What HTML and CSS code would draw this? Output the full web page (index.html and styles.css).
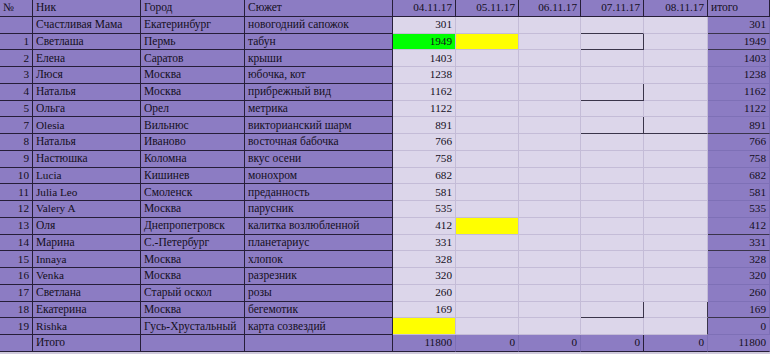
FILE: index.html
```html
<!DOCTYPE html>
<html lang="ru">
<head>
<meta charset="utf-8">
<title>Таблица</title>
<link rel="stylesheet" href="styles.css">
</head>
<body>
<table class="sheet">
  <colgroup>
    <col class="c-num"><col class="c-nick"><col class="c-city"><col class="c-plot">
    <col class="c-d1"><col class="c-d2"><col class="c-d3"><col class="c-d4"><col class="c-d5"><col class="c-tot">
  </colgroup>
  <thead>
    <tr class="head">
      <th class="p">№</th><th class="p">Ник</th><th class="p">Город</th><th class="p">Сюжет</th>
      <th class="p r n">04.11.17</th><th class="p r n">05.11.17</th><th class="p r n">06.11.17</th><th class="p r n">07.11.17</th><th class="p r n">08.11.17</th><th class="p tothead">итого</th>
    </tr>
  </thead>
  <tbody>
    <tr><td class="p r n"></td><td class="p">Счастливая Мама</td><td class="p">Екатеринбург</td><td class="p">новогодний сапожок</td><td class="v n">301</td><td class="v"></td><td class="v"></td><td class="v dk-bot"></td><td class="v"></td><td class="t n dk-bot">301</td></tr>
    <tr><td class="p r n">1</td><td class="p">Светлаша</td><td class="p">Пермь</td><td class="p">табун</td><td class="v n green">1949</td><td class="v yellow"></td><td class="v"></td><td class="v dk-right dk-bot"></td><td class="v"></td><td class="t n dk-bot">1949</td></tr>
    <tr><td class="p r n">2</td><td class="p">Елена</td><td class="p">Саратов</td><td class="p">крыши</td><td class="v n">1403</td><td class="v"></td><td class="v"></td><td class="v"></td><td class="v"></td><td class="t n">1403</td></tr>
    <tr><td class="p r n">3</td><td class="p">Люся</td><td class="p">Москва</td><td class="p">юбочка, кот</td><td class="v n">1238</td><td class="v"></td><td class="v"></td><td class="v"></td><td class="v"></td><td class="t n">1238</td></tr>
    <tr><td class="p r n">4</td><td class="p">Наталья</td><td class="p">Москва</td><td class="p">прибрежный вид</td><td class="v n">1162</td><td class="v"></td><td class="v"></td><td class="v dk-right dk-bot"></td><td class="v"></td><td class="t n">1162</td></tr>
    <tr><td class="p r n">5</td><td class="p">Ольга</td><td class="p">Орел</td><td class="p">метрика</td><td class="v n">1122</td><td class="v"></td><td class="v"></td><td class="v"></td><td class="v"></td><td class="t n">1122</td></tr>
    <tr><td class="p r n">7</td><td class="p n">Olesia</td><td class="p">Вильнюс</td><td class="p">викторианский шарм</td><td class="v n">891</td><td class="v"></td><td class="v"></td><td class="v dk-right dk-bot"></td><td class="v dk-bot"></td><td class="t n dk-bot">891</td></tr>
    <tr><td class="p r n">8</td><td class="p">Наталья</td><td class="p">Иваново</td><td class="p">восточная бабочка</td><td class="v n">766</td><td class="v"></td><td class="v"></td><td class="v"></td><td class="v"></td><td class="t n">766</td></tr>
    <tr><td class="p r n">9</td><td class="p">Настюшка</td><td class="p">Коломна</td><td class="p">вкус осени</td><td class="v n">758</td><td class="v"></td><td class="v"></td><td class="v"></td><td class="v"></td><td class="t n">758</td></tr>
    <tr><td class="p r n">10</td><td class="p n">Lucia</td><td class="p">Кишинев</td><td class="p">монохром</td><td class="v n">682</td><td class="v"></td><td class="v"></td><td class="v"></td><td class="v"></td><td class="t n">682</td></tr>
    <tr><td class="p r n">11</td><td class="p n">Julia Leo</td><td class="p">Смоленск</td><td class="p">преданность</td><td class="v n">581</td><td class="v"></td><td class="v"></td><td class="v"></td><td class="v"></td><td class="t n">581</td></tr>
    <tr><td class="p r n">12</td><td class="p n">Valery A</td><td class="p">Москва</td><td class="p">парусник</td><td class="v n">535</td><td class="v"></td><td class="v"></td><td class="v"></td><td class="v"></td><td class="t n">535</td></tr>
    <tr><td class="p r n">13</td><td class="p">Оля</td><td class="p">Днепропетровск</td><td class="p">калитка возлюбленной</td><td class="v n">412</td><td class="v yellow"></td><td class="v"></td><td class="v"></td><td class="v"></td><td class="t n dk-bot">412</td></tr>
    <tr><td class="p r n">14</td><td class="p">Марина</td><td class="p">С.-Петербург</td><td class="p">планетариус</td><td class="v n">331</td><td class="v"></td><td class="v"></td><td class="v"></td><td class="v"></td><td class="t n dk-bot">331</td></tr>
    <tr><td class="p r n">15</td><td class="p n">Innaya</td><td class="p">Москва</td><td class="p">хлопок</td><td class="v n">328</td><td class="v"></td><td class="v"></td><td class="v"></td><td class="v"></td><td class="t n">328</td></tr>
    <tr><td class="p r n">16</td><td class="p n">Venka</td><td class="p">Москва</td><td class="p">разрезник</td><td class="v n">320</td><td class="v"></td><td class="v"></td><td class="v"></td><td class="v"></td><td class="t n">320</td></tr>
    <tr><td class="p r n">17</td><td class="p">Светлана</td><td class="p">Старый оскол</td><td class="p">розы</td><td class="v n">260</td><td class="v"></td><td class="v"></td><td class="v"></td><td class="v"></td><td class="t n">260</td></tr>
    <tr><td class="p r n">18</td><td class="p">Екатерина</td><td class="p">Москва</td><td class="p">бегемотик</td><td class="v n">169</td><td class="v"></td><td class="v"></td><td class="v dk-right dk-bot"></td><td class="v dk-right"></td><td class="t n dk-bot">169</td></tr>
    <tr><td class="p r n">19</td><td class="p n">Rishka</td><td class="p">Гусь-Хрустальный</td><td class="p">карта созвездий</td><td class="v yellow"></td><td class="v"></td><td class="v"></td><td class="v"></td><td class="v dk-right"></td><td class="t n">0</td></tr>
  </tbody>
  <tfoot>
    <tr class="foot"><td class="p"></td><td class="p">Итого</td><td class="p"></td><td class="p"></td><td class="p r n soft">11800</td><td class="p r n soft">0</td><td class="p r n soft">0</td><td class="p r n">0</td><td class="p r n soft">0</td><td class="p r n last">11800</td></tr>
  </tfoot>
</table>
</body>
</html>
```

FILE: styles.css
```css
html, body {
  margin: 0;
  padding: 0;
  background: #cfc9dc;
}

.sheet {
  border-collapse: separate;
  border-spacing: 0;
  table-layout: fixed;
  width: 770px;
  font-family: "Liberation Serif", "Times New Roman", serif;
  font-size: 11.5px;
  color: #140f1c;
}

.c-num { width: 33px; }
.c-nick { width: 108px; }
.c-city { width: 104px; }
.c-plot { width: 148px; }
.c-d1 { width: 63px; }
.c-d2 { width: 63px; }
.c-d3 { width: 62px; }
.c-d4 { width: 63px; }
.c-d5 { width: 64px; }
.c-tot { width: 62px; }

.sheet th,
.sheet td {
  box-sizing: border-box;
  height: 16.76px;
  padding: 0 3px;
  line-height: 13px;
  white-space: nowrap;
  overflow: hidden;
  font-weight: normal;
  vertical-align: middle;
  border-style: none solid solid none;
  border-width: 0 1px 1px 0;
}

/* numbers and Latin text render narrower in the original sheet */
.n { font-size: 11.2px; }

/* purple (styled) cells */
.p {
  background: #8c7cc3;
  border-color: #261e38;
  text-align: left;
}
.p.r { text-align: right; }
.tothead { padding-left: 2px; }

/* light value cells */
.v {
  background: #dcd6ea;
  border-color: #c4bcd7;
  text-align: right;
}

/* totals column */
.t {
  background: #8c7cc3;
  border-color: #7e70b6;
  text-align: right;
}

.green { background: #00ff00; }
.yellow { background: #ffff00; }

.dk-right { border-right-color: #3a344a; }
.dk-bot { border-bottom-color: #3a344a; }

.foot .soft { border-right-color: #7e70b6; }
.foot .last { border-right-color: #8c7cc3; }
```
